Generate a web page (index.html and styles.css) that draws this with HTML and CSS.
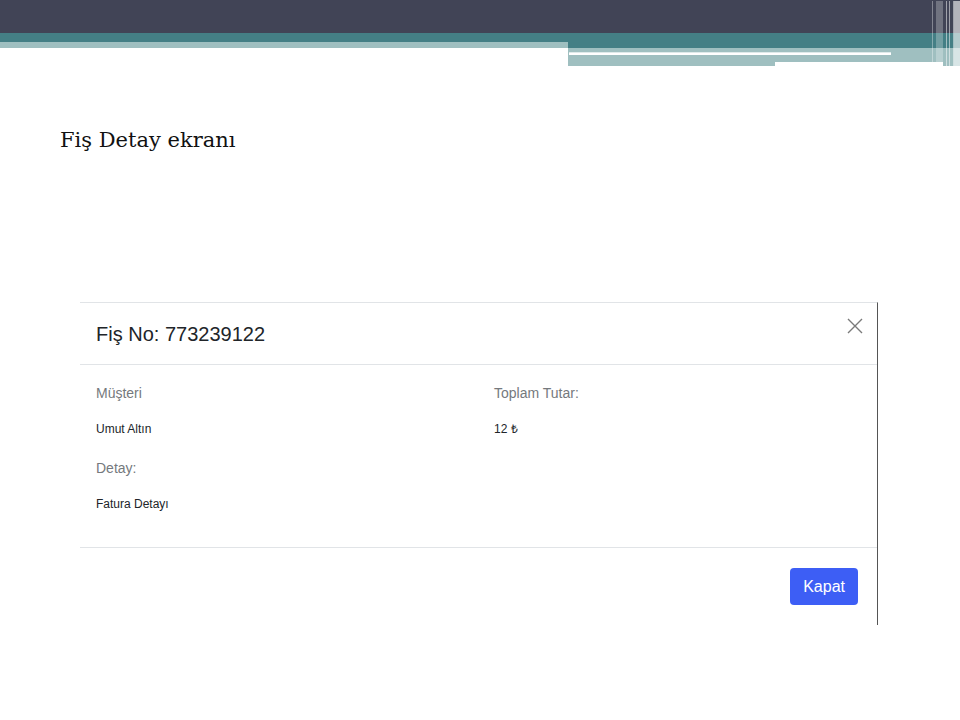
FILE: index.html
```html
<!DOCTYPE html>
<html lang="tr">
<head>
<meta charset="utf-8">
<title>Fiş Detay ekranı</title>
<link rel="stylesheet" href="styles.css">
</head>
<body>
<header class="banner">
  <div class="bar-dark"></div>
  <div class="bar-row">
    <div class="bar-left">
      <div class="teal-short"></div>
      <div class="light-short"></div>
    </div>
    <div class="bar-right">
      <div class="teal-long"></div>
      <div class="light-long">
        <div class="white-line"></div>
        <div class="white-block"></div>
      </div>
    </div>
  </div>
  <div class="stripes">
    <span class="s s1"></span>
    <span class="s s2"></span>
    <span class="s s3"></span>
    <span class="s s4"></span>
    <span class="s s5"></span>
    <span class="s s6"></span>
  </div>
</header>

<main class="slide">
  <h1 class="slide-title">Fiş Detay ekranı</h1>

  <section class="modal">
    <div class="modal-header">
      <h2 class="modal-title">Fiş No: 773239122</h2>
      <span class="close" aria-label="Kapat">
        <svg width="16" height="16" viewBox="0 0 16 16"><path d="M1 1L15 15M15 1L1 15" stroke="#7a7a7a" stroke-width="1.4" fill="none"/></svg>
      </span>
    </div>
    <div class="modal-body">
      <div class="field">
        <div class="label">Müşteri</div>
        <div class="value">Umut Altın</div>
      </div>
      <div class="field">
        <div class="label">Toplam Tutar:</div>
        <div class="value">12 ₺</div>
      </div>
      <div class="field">
        <div class="label">Detay:</div>
        <div class="value">Fatura Detayı</div>
      </div>
    </div>
    <div class="modal-footer">
      <button class="btn">Kapat</button>
    </div>
  </section>
</main>
</body>
</html>
```

FILE: styles.css
```css
* { box-sizing: border-box; }

html, body {
  margin: 0;
  padding: 0;
  background: #ffffff;
}

body {
  width: 960px;
  height: 720px;
  overflow: hidden;
  font-family: "Liberation Sans", Arial, sans-serif;
}

/* ---------- banner ---------- */
.banner {
  position: relative;
  height: 66px;
}

.bar-dark {
  height: 33px;
  background: #414456;
}

.bar-row {
  display: flex;
  height: 33px;
}

.bar-left {
  width: 568px;
}

.teal-short {
  height: 9px;
  background: #447f85;
}

.light-short {
  height: 6px;
  background: #9fbfc0;
}

.bar-right {
  flex: 1;
}

.teal-long {
  height: 15px;
  background: #447f85;
}

.light-long {
  height: 18px;
  background: #9fbfc0;
  padding-top: 4px;
}

.white-line {
  width: 322px;
  height: 3px;
  margin-left: 1px;
  background: #ffffff;
  border-top: 1px solid #dfeaea;
}

.white-block {
  width: 168px;
  height: 4px;
  margin-left: 207px;
  margin-top: 7px;
  background: #ffffff;
}

.stripes {
  position: absolute;
  top: 1px;
  right: 0;
  width: 28px;
  height: 65px;
  display: flex;
}

.s {
  display: block;
  height: 100%;
  background: rgba(255, 255, 255, 0.35);
}

.s1 { width: 1px; margin-left: 0; height: 61px; }
.s2 { width: 7px; margin-left: 3px; background: rgba(255, 255, 255, 0.25); }
.s3 { width: 1px; margin-left: 3px; background: rgba(255, 255, 255, 0.5); }
.s4 { width: 1px; margin-left: 2px; background: rgba(255, 255, 255, 0.5); }
.s5 { width: 1px; margin-left: 3px; background: rgba(255, 255, 255, 0.5); }
.s6 { width: 6px; margin-left: 0; background: rgba(255, 255, 255, 0.6); }

/* ---------- slide ---------- */
.slide {
  padding: 0 0 0 80px;
}

.slide-title {
  margin: 60px 0 0 -20px;
  font-family: "DejaVu Serif", Georgia, serif;
  font-weight: normal;
  font-size: 21px;
  line-height: 28px;
  color: #111111;
}

/* ---------- modal ---------- */
.modal {
  width: 798px;
  margin-top: 148px;
  border-top: 1px solid #e1e4e7;
  border-right: 1.5px solid #555555;
  background: #ffffff;
}

.modal-header {
  display: flex;
  justify-content: space-between;
  align-items: flex-start;
  padding: 16px 14px 15px 16px;
  border-bottom: 1px solid #e1e4e7;
}

.modal-title {
  margin: 0;
  font-size: 20px;
  line-height: 30px;
  font-weight: normal;
  color: #212529;
}

.close {
  display: block;
  width: 16px;
  height: 16px;
  margin-top: -1px;
}

.close svg { display: block; }

.modal-body {
  display: grid;
  grid-template-columns: 398px 1fr;
  padding: 18px 16px 14px 16px;
  border-bottom: 1px solid #e1e4e7;
}

.field {
  margin-bottom: 20px;
}

.label {
  font-size: 14px;
  line-height: 20px;
  color: #75797d;
  margin-bottom: 17px;
}

.value {
  font-size: 12px;
  line-height: 18px;
  color: #212529;
}

.modal-footer {
  display: flex;
  justify-content: flex-end;
  padding: 20px 19px 20px 16px;
}

.btn {
  height: 37px;
  padding: 0 13px;
  border: none;
  border-radius: 4px;
  background: #3d5ef5;
  color: #ffffff;
  font-family: "Liberation Sans", Arial, sans-serif;
  font-size: 16px;
  line-height: 37px;
}
```
